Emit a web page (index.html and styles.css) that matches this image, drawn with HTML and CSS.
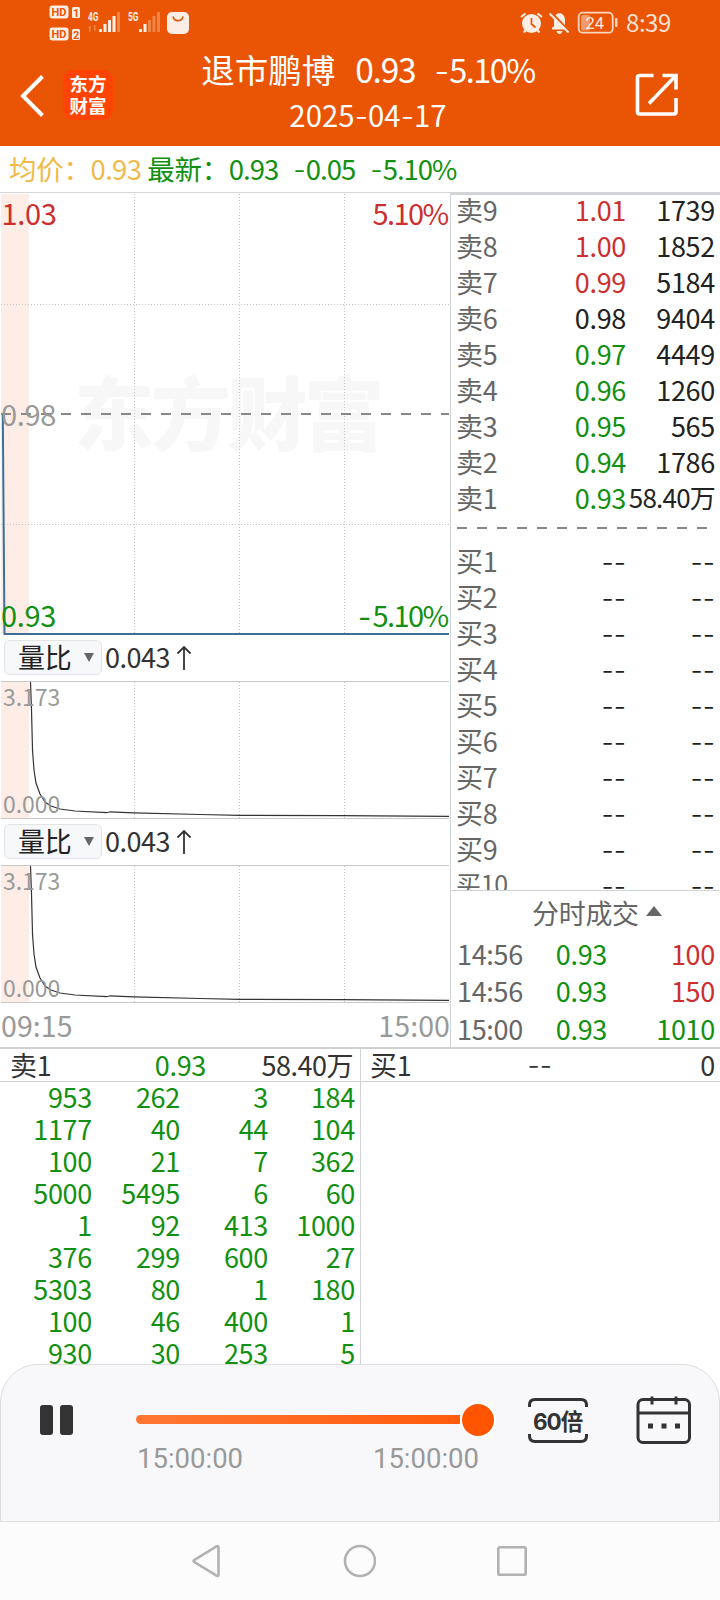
FILE: index.html
```html
<!DOCTYPE html>
<html lang="zh-CN">

<head>
    <meta charset="UTF-8">
    <title>退市鹏博</title>
    <meta name="viewport" content="width=device-width, initial-scale=1.0, user-scalable=no" />
    <link rel="stylesheet" href="styles.css">
</head>

<body>
    <div class="header">
        <div class="status">
            <svg class="status-left" width="150" height="46" viewBox="48 0 150 46">
                <g fill="#fdeee5">
                    <rect x="49.500" y="5.500" width="19" height="13" rx="3" />
                    <rect x="72" y="7" width="8" height="11" rx="1.500" />
                    <rect x="49.500" y="27.500" width="19" height="13" rx="3" />
                    <rect x="72" y="29" width="8" height="11" rx="1.500" />
                </g>
                <g class="tiny" fill="#e95504">
                    <text x="51.500" y="16" textLength="15">HD</text>
                    <text x="73" y="16.500">1</text>
                    <text x="51.500" y="38" textLength="15">HD</text>
                    <text x="73" y="38.500">2</text>
                </g>
                <g class="tiny net" fill="#fdeee5">
                    <text x="88" y="20.500" textLength="10.500" lengthAdjust="spacingAndGlyphs">4G</text>
                    <text x="128" y="20.500" textLength="10.500" lengthAdjust="spacingAndGlyphs">5G</text>
                </g>
                <path d="M99 29h3v3h-3zM103.500 24h3v8h-3zM108 20h3v12h-3zM112.500 16h3v16h-3zM139 29h3v3h-3zM143.500 24h3v8h-3z" fill="#fdeee5" />
                <path d="M117 12h3v20h-3zM148 20h3v12h-3zM152.500 16h3v16h-3zM157 12h3v20h-3zM90.500 25v7h-1.500v-4l-1.500 1zM94 32v-7h1.500v4l1.500-1z" fill="#f08548" />
                <rect x="167" y="12" width="22" height="22" rx="5" fill="#fdeee5" />
                <path d="M173 16.500c1 5.500 9 5.500 10 0" fill="none" stroke="#e95504" stroke-width="1.500" />
            </svg>
            <svg class="status-right" width="155" height="46" viewBox="518 0 155 46">
                <circle cx="531.500" cy="23.500" r="9.500" fill="#fdeee5" />
                <path d="M521 17l4.500-3.500M542 17l-4.500-3.500M525.500 30.500l-2 2M537.500 30.500l2 2" stroke="#fdeee5" stroke-width="2.200" />
                <path d="M531.500 18v6l4 3.500" fill="none" stroke="#e95504" stroke-width="1.700" />
                <path d="M552 29.500v-1.500l2-2v-6c0-9 11-9 11 0v6l3.500 3.500zM556.500 31h6c-1 4-5 4-6 0z" fill="#fdeee5" />
                <path d="M551.500 12.500l19 20" stroke="#e95504" stroke-width="2" />
                <path d="M549.500 13.500l19 19" stroke="#fdeee5" stroke-width="2" />
                <rect x="578.700" y="12.700" width="34" height="20" rx="4" fill="none" stroke="#fbd5c0" stroke-width="1.800" />
                <rect x="581" y="15" width="9" height="15.500" rx="1.500" fill="#f19a6b" />
                <rect x="615" y="18" width="2.500" height="9" rx="1" fill="#fbd5c0" />
                <text class="battery" x="585.500" y="28.800">24</text>
                <text class="clock" x="626" y="32" textLength="45">8:39</text>
            </svg>
        </div>
        <div class="titlebar">
            <svg class="back" width="24" height="42" viewBox="0 0 24 42">
                <path d="M22.500 1.500L3 21l19.500 19.500" fill="none" stroke="#fff" stroke-width="4" />
            </svg>
            <div class="logo"><span>东方</span><span>财富</span></div>
            <div class="title">
                <p class="mainTitle"><span>退市鹏博</span><span class="num">0.93</span><span class="num rate"><i>-</i>5.10%</span></p>
                <p class="subTitle">2025<i>-</i>04<i>-</i>17</p>
            </div>
            <svg class="share" width="44" height="44" viewBox="0 0 44 44">
                <g fill="none" stroke="#fff" stroke-width="3.600">
                    <path d="M18.500 2.500h-14q-2 0-2 2v34.500q0 2 2 2h34.500q2 0 2-2v-14" />
                    <path d="M27.500 2.500h13.500v14" />
                    <path d="M14 30.500l26.500-27.500" />
                </g>
            </svg>
        </div>
    </div>

    <div class="summary">
        <span class="avg">均价：</span><span class="avg avg-num">0.93</span>
        <span class="green">最新：</span><span class="green num last">0.93</span>
        <span class="green num diff"><i>-</i>0.05</span><span class="green num"><i>-</i>5.10%</span>
    </div>

    <div class="main">
        <div class="charts">
            <!-- 分时图 -->
            <svg class="chart" width="450" height="442" viewBox="0 193 450 442">
                <rect x="1" y="194" width="28" height="440" class="pre" />
                <text class="watermark" x="74" y="444" textLength="310">东方财富</text>
                <g class="grid">
                    <path d="M134.500 194v440M239.500 194v440M344.500 194v440M1 304.500h448M1 524.500h448" />
                </g>
                <path d="M1 414h10M21 414h10M41 414h10M61 414h388" class="mid" />
                <path d="M2.800 414L4.500 634H449" class="price-line" />
                <g class="axis">
                    <text x="1.500" y="225" textLength="55" class="t-red">1.03</text>
                    <text x="372.500" y="225" textLength="76.500" class="t-red">5.10%</text>
                    <text x="1" y="426" textLength="55" class="t-gray">0.98</text>
                    <text x="1" y="627" textLength="55" class="t-green">0.93</text>
                    <text x="372.500" y="627" textLength="76.500" class="t-green">5.10%</text>
                    <text x="358" y="628" class="t-green dash">-</text>
                </g>
            </svg>

            <div class="index-bar">
                <div class="select">量比<b></b></div>
                <span>0.043</span>
                <svg width="16" height="26" viewBox="0 0 16 26"><path d="M8 25V2M1.500 8.500L8 2l6.500 6.500" fill="none" stroke="#333" stroke-width="1.800" /></svg>
            </div>
            <svg class="chart" width="450" height="138" viewBox="0 681 450 138">
                <rect x="1" y="682" width="28" height="136" class="pre" />
                <path d="M134.500 682v136M239.500 682v136M344.500 682v136" class="grid" />
                <path d="M1 681.500h448M1 818.500h448" class="edge" />
                <path d="M30.500 682L31.500 710 32.500 750 34 770 36 783 40 794 45 802 51 806 60 809 75 811 107 812.700 110 811.800 134 812.800 200 814.500 240 815.300 340 815.600 449 816.400" class="curve" />
                <text x="3" y="706" textLength="57" class="axis-small">3.173</text>
                <text x="3" y="813" textLength="57" class="axis-small">0.000</text>
            </svg>

            <div class="index-bar">
                <div class="select">量比<b></b></div>
                <span>0.043</span>
                <svg width="16" height="26" viewBox="0 0 16 26"><path d="M8 25V2M1.500 8.500L8 2l6.500 6.500" fill="none" stroke="#333" stroke-width="1.800" /></svg>
            </div>
            <svg class="chart" width="450" height="138" viewBox="0 681 450 138">
                <rect x="1" y="682" width="28" height="136" class="pre" />
                <path d="M134.500 682v136M239.500 682v136M344.500 682v136" class="grid" />
                <path d="M1 681.500h448M1 818.500h448" class="edge" />
                <path d="M30.500 682L31.500 710 32.500 750 34 770 36 783 40 794 45 802 51 806 60 809 75 811 107 812.700 110 811.800 134 812.800 200 814.500 240 815.300 340 815.600 449 816.400" class="curve" />
                <text x="3" y="706" textLength="57" class="axis-small">3.173</text>
                <text x="3" y="813" textLength="57" class="axis-small">0.000</text>
            </svg>
            <div class="times"><span>09:15</span><span>15:00</span></div>
        </div>

        <div class="side">
            <!-- 买卖盘 -->
            <div class="book">
                <div class="row"><span>卖9</span><span class="red">1.01</span><span>1739</span></div>
                <div class="row"><span>卖8</span><span class="red">1.00</span><span>1852</span></div>
                <div class="row"><span>卖7</span><span class="red">0.99</span><span>5184</span></div>
                <div class="row"><span>卖6</span><span>0.98</span><span>9404</span></div>
                <div class="row"><span>卖5</span><span class="green">0.97</span><span>4449</span></div>
                <div class="row"><span>卖4</span><span class="green">0.96</span><span>1260</span></div>
                <div class="row"><span>卖3</span><span class="green">0.95</span><span>565</span></div>
                <div class="row"><span>卖2</span><span class="green">0.94</span><span>1786</span></div>
                <div class="row"><span>卖1</span><span class="green">0.93</span><span class="wan">58.40万</span></div>
                <svg class="split" width="250" height="24" viewBox="0 0 250 24"><path d="M0 12h250" stroke="#888" stroke-width="2" stroke-dasharray="10 10" /></svg>
                <div class="row"><span>买1</span><i>--</i><i>--</i></div>
                <div class="row"><span>买2</span><i>--</i><i>--</i></div>
                <div class="row"><span>买3</span><i>--</i><i>--</i></div>
                <div class="row"><span>买4</span><i>--</i><i>--</i></div>
                <div class="row"><span>买5</span><i>--</i><i>--</i></div>
                <div class="row"><span>买6</span><i>--</i><i>--</i></div>
                <div class="row"><span>买7</span><i>--</i><i>--</i></div>
                <div class="row"><span>买8</span><i>--</i><i>--</i></div>
                <div class="row"><span>买9</span><i>--</i><i>--</i></div>
                <div class="row"><span class="ten">买10</span><i>--</i><i>--</i></div>
            </div>
            <div class="deal-title">分时成交<b></b></div>
            <div class="deals">
                <div class="row"><span>14:56</span><span class="green">0.93</span><span class="red">100</span></div>
                <div class="row"><span>14:56</span><span class="green">0.93</span><span class="red">150</span></div>
                <div class="row"><span>15:00</span><span class="green">0.93</span><span class="green">1010</span></div>
            </div>
        </div>
    </div>

    <div class="queue">
        <div class="half">
            <div class="queue-head"><span>卖1</span><span class="green">0.93</span><span class="wan">58.40万</span></div>
            <div class="orders">
                <span>953</span><span>262</span><span>3</span><span>184</span>
                <span>1177</span><span>40</span><span>44</span><span>104</span>
                <span>100</span><span>21</span><span>7</span><span>362</span>
                <span>5000</span><span>5495</span><span>6</span><span>60</span>
                <span>1</span><span>92</span><span>413</span><span>1000</span>
                <span>376</span><span>299</span><span>600</span><span>27</span>
                <span>5303</span><span>80</span><span>1</span><span>180</span>
                <span>100</span><span>46</span><span>400</span><span>1</span>
                <span>930</span><span>30</span><span>253</span><span>5</span>
            </div>
        </div>
        <div class="half half-buy">
            <div class="queue-head"><span>买1</span><i>--</i><span>0</span></div>
        </div>
    </div>

    <div class="player">
        <div class="pause"><b></b><b></b></div>
        <div class="progress">
            <div class="track"><span class="bar"></span><span class="knob"></span></div>
            <div class="progress-time"><span>15:00:00</span><span>15:00:00</span></div>
        </div>
        <svg class="speed" width="60" height="46" viewBox="0 0 60 46">
            <path d="M1.500 9V7q0-5.500 5.500-5.500h46q5.500 0 5.500 5.500v2M1.500 36v2q0 5.500 5.500 5.500h46q5.500 0 5.500-5.500v-2" fill="none" stroke="#333" stroke-width="3" />
            <text x="5" y="32" textLength="50">60倍</text>
        </svg>
        <svg class="calendar" width="56" height="48" viewBox="0 0 56 48">
            <rect x="2" y="3.500" width="51.500" height="43" rx="5" fill="none" stroke="#333" stroke-width="3" />
            <path d="M2 17h51.500M16 .500v8M40 .500v8" stroke="#333" stroke-width="3" />
            <path d="M12 27.500h5v5h-5zM25.500 27.500h5v5h-5zM39 27.500h5v5h-5z" fill="#333" />
        </svg>
    </div>

    <div class="nav">
        <svg width="30" height="34" viewBox="0 0 30 34"><path d="M3.500 15.800L25.500 2.500q2-1 2 1v27q0 2-2 1L3.500 18.200q-2-1.200 0-2.400z" /></svg>
        <svg width="34" height="34" viewBox="0 0 34 34"><circle cx="18" cy="17" r="15" /></svg>
        <svg width="32" height="34" viewBox="0 0 32 34"><rect x="1.300" y="3.300" width="27.400" height="27.400" rx="1.500" /></svg>
    </div>
</body>

</html>
```

FILE: styles.css
```css
* {
    margin: 0;
    padding: 0;
    box-sizing: border-box;
}

body {
    width: 720px;
    height: 1600px;
    overflow: hidden;
    display: flex;
    flex-direction: column;
    background: #fff;
    color: #222;
    font-family: "Noto Sans CJK SC", sans-serif;
    font-size: 27px;
    letter-spacing: -0.3px;
    white-space: nowrap;
}

svg {
    display: block;
    flex: none;
}

i {
    font-family: Inter, sans-serif;
    font-style: normal;
    font-weight: 300;
    letter-spacing: 0;
}

.red {
    color: #cb2f2f;
}

.green {
    color: #119011;
}

/* 顶部 */
.header {
    height: 146px;
    background: #e95504;
    color: #fff;
}

.status {
    height: 46px;
    display: flex;
    justify-content: space-between;
    padding: 0 47px 0 48px;
}

.tiny {
    font-family: Roboto, sans-serif;
    font-size: 11px;
    font-weight: bold;
    letter-spacing: 0;
}

.net {
    font-size: 12px;
}

.battery {
    font-family: Roboto, sans-serif;
    font-size: 16.500px;
    fill: #fdeee5;
    letter-spacing: 0;
}

.clock {
    font-size: 24px;
    fill: #fce0d2;
}

.titlebar {
    height: 100px;
    display: flex;
    align-items: flex-start;
}

.back {
    margin: 29px 0 0 20px;
}

.logo {
    width: 50px;
    height: 50px;
    margin: 24px 0 0 19px;
    padding-top: 2px;
    border-radius: 10px;
    background: #ff4400;
    font-size: 18.500px;
    font-weight: bold;
    line-height: 22px;
    letter-spacing: 0;
    text-align: center;
}

.logo span {
    display: block;
}

.title {
    flex: 1;
    padding: 1px 10px 0 0;
    text-align: center;
}

.mainTitle {
    display: flex;
    justify-content: center;
    gap: 20px;
    margin-right: 2px;
    font-size: 33.500px;
    line-height: 44px;
    letter-spacing: 0;
}

.mainTitle .num {
    letter-spacing: -1.200px;
}

.mainTitle .rate {
    margin-left: -1px;
    font-size: 32.500px;
    letter-spacing: -1.500px;
}

.subTitle {
    margin-right: 2px;
    font-size: 29.300px;
    line-height: 41px;
    letter-spacing: 0.1px;
}

.share {
    margin: 27px 41px 0 0;
}

/* 均价 / 最新 */
.summary {
    height: 47px;
    display: flex;
    padding-left: 9px;
    border-bottom: 1px solid #d5d5d5;
    font-size: 27.500px;
    line-height: 44px;
}

.summary .avg {
    color: #f0ba4a;
}

.summary .avg-num {
    margin-right: 6px;
    letter-spacing: -0.7px;
}

.summary .num {
    letter-spacing: -1px;
}

.summary .last {
    margin-right: 15px;
}

.summary .diff {
    margin-right: 15px;
}

.main {
    display: flex;
    height: 855px;
}

.charts {
    width: 450px;
    border-bottom: 1px solid #d0d0d0;
}

.pre {
    fill: #fdede6;
}

.watermark {
    font-size: 80px;
    font-weight: 900;
    fill: #f7f7f7;
}

.grid {
    fill: none;
    stroke: #c6c6c6;
    stroke-width: 1;
    stroke-dasharray: 1 2;
}

.mid {
    fill: none;
    stroke: #888;
    stroke-width: 2;
    stroke-dasharray: 10 10;
}

.price-line {
    fill: none;
    stroke: #3f6f96;
    stroke-width: 2;
}

.axis {
    font-size: 29px;
}

.axis .dash {
    font-family: Inter, sans-serif;
}

.t-red {
    fill: #cb2f2f;
}

.t-gray {
    fill: #999;
}

.t-green {
    fill: #119011;
}

.axis-small {
    font-size: 23px;
    fill: #999;
}

.edge {
    stroke: #c8c8c8;
}

.curve {
    fill: none;
    stroke: #333;
    stroke-width: 1.200;
}

.index-bar {
    height: 46px;
    display: flex;
    align-items: center;
    padding: 0 0 1px 4px;
    color: #333;
    line-height: 34px;
}

.index-bar span {
    margin: -2px 6px 0 3px;
    letter-spacing: -0.500px;
}

.select {
    width: 98px;
    height: 35px;
    display: flex;
    align-items: center;
    padding: 0 0 2px 13px;
    border: 1px solid #e2e4e8;
    border-radius: 6px;
    background: #f7f8fa;
    color: #222;
    line-height: 30px;
}

.select b {
    margin: 2px 0 0 13px;
    border: 5.500px solid transparent;
    border-top: 9px solid #666;
    border-bottom: 0;
}

.times {
    height: 45px;
    display: flex;
    justify-content: space-between;
    padding: 0 0 0 1px;
    color: #999;
    font-size: 28.500px;
    line-height: 44px;
    letter-spacing: 0.1px;
}

.side {
    width: 270px;
    display: flex;
    flex-direction: column;
    border: 1px solid #d0d3d8;
    border-top-width: 2px;
    border-right: 0;
}

.book {
    height: 696px;
    padding-left: 5px;
    overflow: hidden;
}

.book .row:first-child {
    margin-top: -3px;
}

.row {
    display: grid;
    grid-template-columns: 81px 89px 1fr;
    height: 36px;
    padding-right: 5px;
    line-height: 36px;
    text-align: right;
}

.row i {
    padding-top: 2px;
}

.row span:first-child {
    color: #666;
    text-align: left;
}

.row .wan {
    font-size: 26px;
    letter-spacing: -0.800px;
    line-height: 34px;
}

.row .ten {
    font-size: 25px;
    line-height: 32px;
}

/* 分隔线与买盘之间的空隙 */
.split {
    margin: 0 0 3px 1px;
}

.deal-title {
    height: 45px;
    display: flex;
    align-items: center;
    padding: 0 0 0 81px;
    border-top: 1px solid #d0d3d8;
    color: #666;
    line-height: 42px;
}

.deal-title b {
    margin: 0 0 4px 7px;
    border: 8px solid transparent;
    border-top: 0;
    border-bottom: 10px solid #666;
}

.deals {
    padding-left: 6px;
}

.deals .row {
    grid-template-columns: 80px 70px 1fr;
    height: 37.400px;
    line-height: 37.400px;
}

/* 委托队列 */
.queue {
    display: flex;
    height: 316px;
    overflow: hidden;
    color: #333;
}

.half {
    width: 360px;
    border-top: 1px solid #d0d0d0;
}

.half-buy {
    border-left: 1px solid #d0d3d8;
}

.queue-head {
    display: grid;
    grid-template-columns: 99px 97px 1fr;
    height: 33px;
    padding: 0 7px 0 10px;
    border-bottom: 1px solid #d0d3d8;
    line-height: 32px;
    text-align: right;
}

.queue-head .wan {
    letter-spacing: -0.5px;
}

.half-buy .queue-head {
    grid-template-columns: 99px 83px 1fr;
    padding: 0 5px 0 9px;
}

.queue-head i {
    padding-top: 1px;
}

.queue-head span:first-child {
    text-align: left;
}

.orders {
    display: grid;
    grid-template-columns: 92px 88px 88px 87px;
    grid-auto-rows: 32px;
    margin-top: -1px;
    color: #119011;
    line-height: 32px;
    text-align: right;
}

/* 回放控制 */
.player {
    height: 158px;
    display: flex;
    border: 1px solid #dedee0;
    border-radius: 38px 38px 0 0;
    background: #f8f8fb;
}

.pause {
    width: 33px;
    height: 30px;
    display: flex;
    justify-content: space-between;
    margin: 40px 0 0 39px;
}

.pause b {
    width: 13px;
    border-radius: 3px;
    background: #333;
}

.progress {
    width: 360px;
    margin: 39px 0 0 63px;
}

.track {
    display: flex;
    align-items: center;
    height: 32px;
}

.bar {
    width: 324px;
    height: 9px;
    margin-top: -2px;
    border-radius: 5px 0 0 5px;
    background: linear-gradient(90deg, #ff7733, #ff5c0d);
}

.knob {
    width: 36px;
    height: 36px;
    flex: none;
    border: 2px solid #fff;
    border-radius: 50%;
    background: #ff5500;
}

.progress-time {
    display: flex;
    justify-content: space-between;
    padding: 1px 17px 0 1px;
    color: #999;
    font-family: Roboto, "Noto Sans CJK SC", sans-serif;
    font-size: 27.500px;
    line-height: 44px;
    letter-spacing: 0;
}

.speed {
    margin: 33px 0 0 32px;
    font-family: Inter, "Noto Sans CJK SC", sans-serif;
    font-size: 22.500px;
    font-weight: bold;
    fill: #333;
}

.calendar {
    margin: 31px 0 0 48px;
}

.nav {
    flex: 1;
    display: flex;
    justify-content: center;
    align-items: center;
    gap: 121px;
    background: #fcfcfc;
    fill: none;
    stroke: #b2b2b2;
    stroke-width: 2.600;
}
```
